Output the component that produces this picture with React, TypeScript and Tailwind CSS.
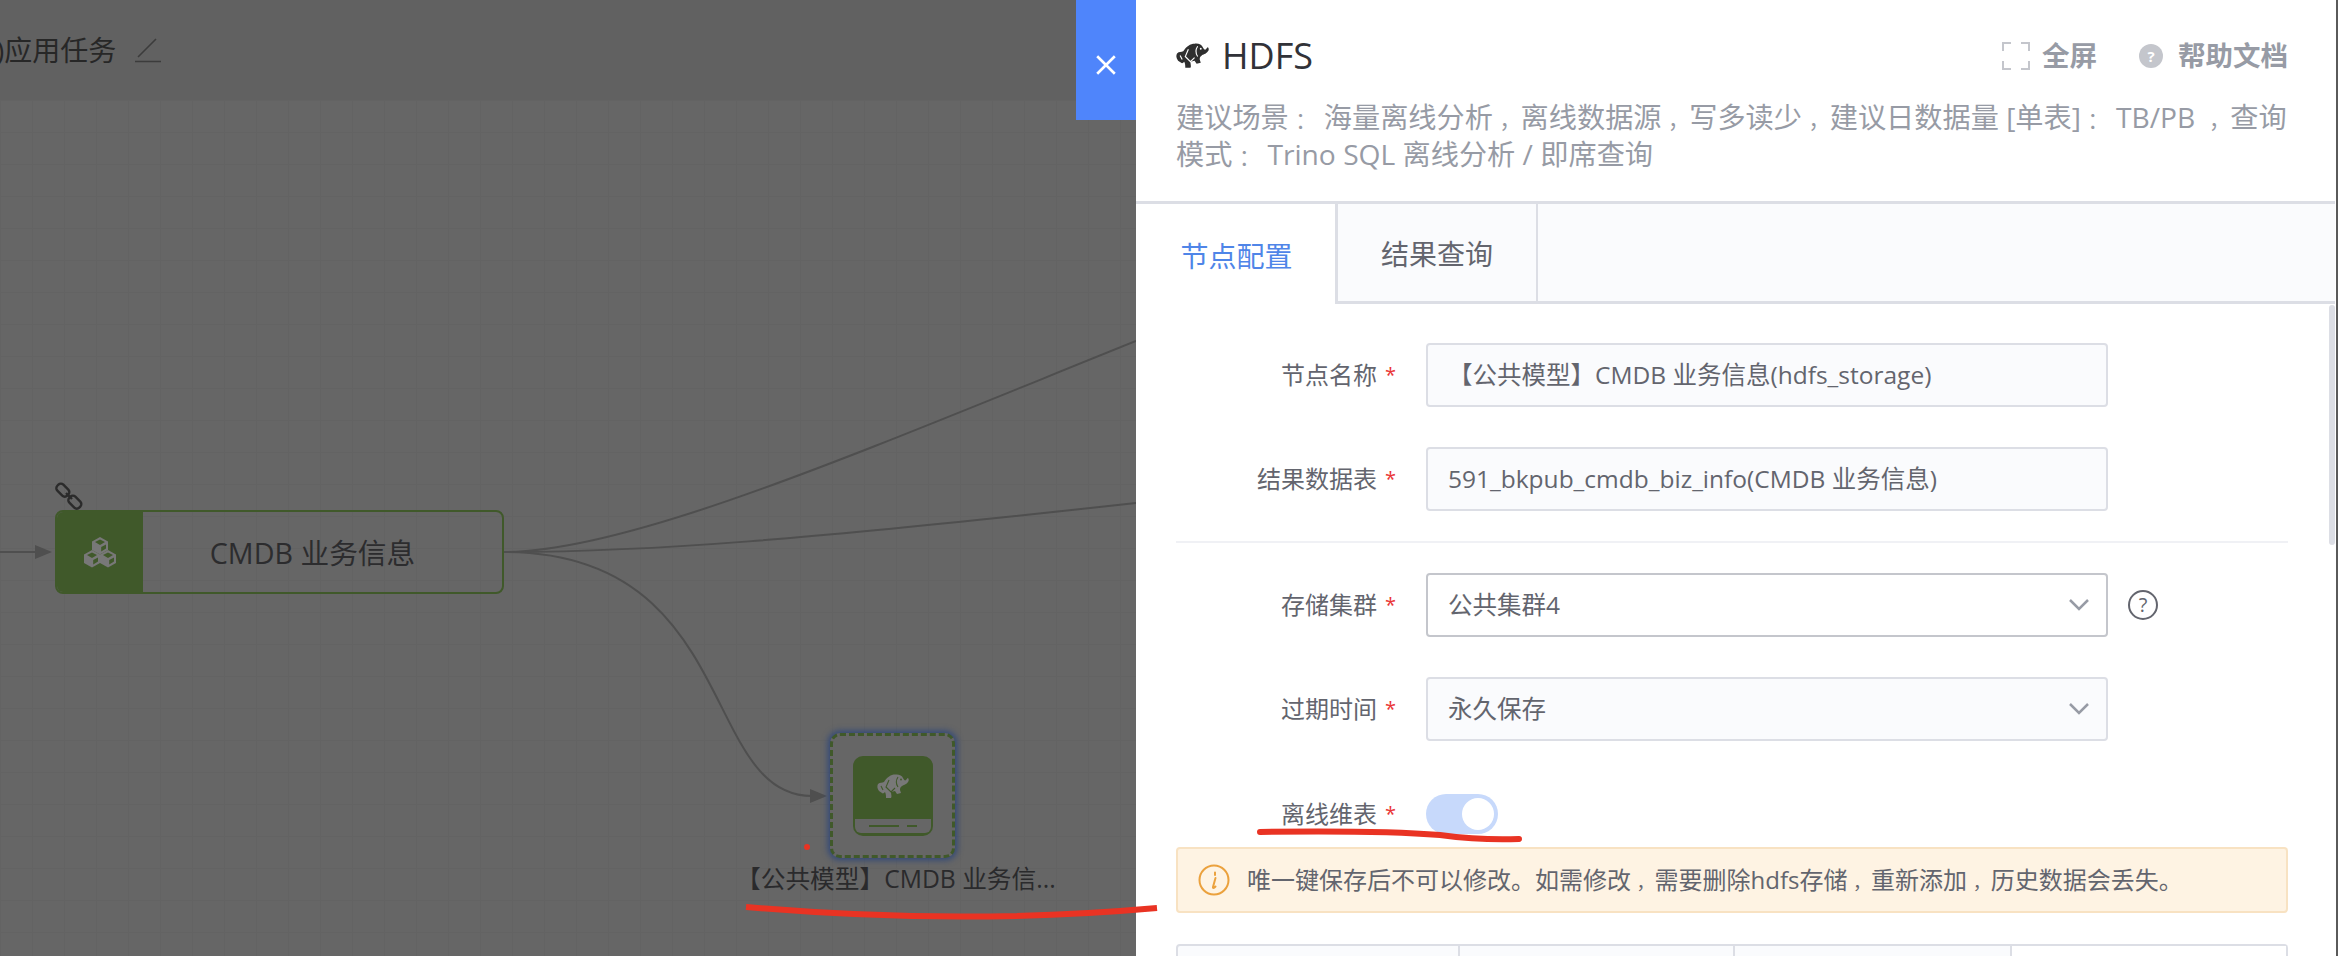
import React from "react";

const Cube = ({ x, y }: { x: number; y: number }) => (
  <g transform={`translate(${x} ${y})`}>
    <polygon points="8,0 16,4.5 16,13 8,17.5 0,13 0,4.5" fill="#787878" />
    <polygon points="8,2.5 13,5 8,8 3,5" fill="#40592a" />
    <polygon points="9.2,10 14,7.5 14,11.5 9.2,14.5" fill="#40592a" />
  </g>
);

const Elephant = ({ w, h, fill, line }: { w: number; h: number; fill: string; line: string }) => (
  <svg width={w} height={h} viewBox="0 0 32 25">
    <path
      fill={fill}
      d="M1 10C3 8 5 9 7 8C10 3 14 .5 18 .5C22 0 25 1.5 26 4C27 6 28 7 29 6C30 5 30 4 31 4C32 5 32 7 31 8C29 11 26 11 25 12C23 13 23 15 23 16L24 19L20 20L18 17L14 18C14 20 15 23 14 24L9 24C9 22 9 20 8 18C7 19 6 20 5 19L2 17C0 14 0 12 1 10Z"
    />
    <path fill="none" stroke={line} strokeWidth="1.1" d="M12 6L9 13L14 18L18 14M21 3C19 6 19 10 21 13M4 12L6 16" />
    <circle cx="24" cy="5.5" r="0.9" fill={line} />
  </svg>
);

const FormRow = ({ label, children }: { label: string; children: React.ReactNode }) => (
  <div className="flex items-center">
    <div className="w-[250px] pr-[32px] flex justify-end items-center text-[24px] text-[#63656e]">
      <span>{label}</span>
      <span className="ml-[8px] w-[9px] text-[20px] text-[#ea3636] leading-none">*</span>
    </div>
    {children}
  </div>
);

const Field = ({ text, white, select }: { text: string; white?: boolean; select?: boolean }) => (
  <div
    className={`w-[682px] h-[64px] rounded-[4px] border-2 flex items-center justify-between pl-[20px] pr-[16px] text-[24.5px] text-[#63656e] ${
      white ? "bg-white border-[#c4c6cc]" : "bg-[#fafbfd] border-[#dcdee5]"
    }`}
  >
    <span className="whitespace-nowrap">{text}</span>
    {select && (
      <svg width="22" height="14" viewBox="0 0 22 14" fill="none" stroke="#979ba5" strokeWidth="2.5">
        <path d="M2 2l9 9 9-9" />
      </svg>
    )}
  </div>
);

/* Full-width punctuation sits in the middle of its cell in the picture. */
const P = ({ c }: { c: string }) => (
  <span className="pl-[0.31em] text-[0.75em]">{c}</span>
);

export default function App() {
  return (
    <div className="relative flex w-[2338px] h-[956px] overflow-hidden bg-[#666666] [font-family:'Open_Sans','Noto_Sans_CJK_SC',sans-serif]">
      {/* Left dimmed canvas */}
      <div className="relative flex flex-col w-[1136px] h-full shrink-0">
        <div className="h-[100px] bg-[#616161] flex items-center overflow-hidden">
          <span className="ml-[-4px] text-[28px] text-[#272727] whitespace-nowrap">)应用任务</span>
          <svg className="ml-[18px]" width="28" height="26" viewBox="0 0 28 26" fill="none" stroke="#3c3c3c" strokeWidth="1.6">
            <path d="M1 24.5h26M4 20L22 2" />
          </svg>
        </div>
        <div className="flex-1 bg-[#666666] bg-[linear-gradient(#636363_1px,transparent_1px),linear-gradient(90deg,#636363_1px,transparent_1px)] bg-[size:32px_32px]" />

        {/* Wires */}
        <svg className="absolute left-0 top-0" width="1136" height="956" fill="none" stroke="#4f4f4f" strokeWidth="2">
          <path d="M0 552H36" />
          <path d="M504 552C630 552 860 452 1136 341" />
          <path d="M504 552C650 552 800 540 1136 503" />
          <path d="M504 552C740 552 700 796 812 796" />
          <polygon points="35,545 52,552 35,559" fill="#4f4f4f" stroke="none" />
          <polygon points="810,789 827,796 810,803" fill="#4f4f4f" stroke="none" />
        </svg>

        {/* Source node */}
        <svg className="absolute left-[54px] top-[481px]" width="30" height="30" viewBox="0 0 30 30" fill="none" stroke="#2b2b2b" strokeWidth="2.4">
          <rect x="2" y="5" width="14" height="8.5" rx="3.5" transform="rotate(45 9 9)" />
          <rect x="14" y="17" width="14" height="8.5" rx="3.5" transform="rotate(45 21 21)" />
          <path d="M12 12l6 6" />
        </svg>
        <div className="absolute left-[55px] top-[510px] w-[449px] h-[84px] rounded-[8px] border-2 border-[#40592a] flex overflow-hidden">
          <div className="w-[86px] bg-[#40592a] flex items-center justify-center">
            <svg width="32" height="31" viewBox="0 0 32 31">
              <Cube x={8} y={0} />
              <Cube x={0} y={13} />
              <Cube x={16} y={13} />
            </svg>
          </div>
          <div className="flex-1 flex items-center justify-center pr-[20px] pt-[2px] text-[28.7px] text-[#2c2c2e]">CMDB 业务信息</div>
        </div>

        {/* Storage node */}
        <div className="absolute left-[830px] top-[733px] w-[125px] h-[125px] rounded-[10px] border-[3px] border-dashed border-[#40592a] shadow-[0_0_6px_2px_#2f4779] bg-[#666666] flex items-center justify-center">
          <div className="w-[80px] h-[80px] rounded-[10px] bg-[#40592a] flex flex-col overflow-hidden">
            <div className="flex-1 flex items-center justify-center pb-[2px]">
              <Elephant w={32} h={25} fill="#787878" line="#40592a" />
            </div>
            <div className="mx-[2px] mb-[3px] h-[14px] rounded-b-[6px] bg-[#666666] flex items-center pl-[14px] gap-[8px]">
              <span className="w-[30px] h-[2px] bg-[#40592a]" />
              <span className="w-[10px] h-[2px] bg-[#40592a]" />
            </div>
          </div>
        </div>
        <div className="absolute left-[804px] top-[844px] w-[6px] h-[6px] rounded-full bg-[#e93323]" />
        <div className="absolute left-[736px] top-[863px] text-[24.7px] leading-[32px] text-[#2a2a2c] whitespace-nowrap">【公共模型】CMDB 业务信...</div>

        {/* Close button */}
        <div className="absolute right-0 top-0 w-[60px] h-[120px] bg-[#4f85fb] flex items-center justify-center">
          <svg className="mt-[10px]" width="22" height="22" viewBox="0 0 20 20" stroke="#ffffff" strokeWidth="2.4">
            <path d="M2 2l16 16M18 2L2 18" />
          </svg>
        </div>
      </div>

      {/* Right panel */}
      <div className="relative w-[1200px] h-full shrink-0 bg-white overflow-hidden flex flex-col">
        <div className="h-[201px] shrink-0 pl-[40px] pr-[48px] pt-[30px]">
          <div className="flex items-center justify-between h-[52px]">
            <div className="flex items-center">
              <Elephant w={33} h={26} fill="#2f2f2f" line="#ffffff" />
              <span className="ml-[13px] text-[36px] leading-none text-[#313238]">HDFS</span>
            </div>
            <div className="flex items-center font-bold text-[27.5px] text-[#979ba5]">
              <svg width="28" height="28" viewBox="0 0 28 28" fill="none" stroke="#c4c6cc" strokeWidth="2">
                <path d="M1 9V1h8M19 1h8v8M27 19v8h-8M9 27H1v-8" />
              </svg>
              <span className="ml-[12px]">全屏</span>
              <span className="ml-[42px] w-[24px] h-[24px] rounded-full bg-[#c4c6cc] text-white text-[15px] flex items-center justify-center">?</span>
              <span className="ml-[15px]">帮助文档</span>
            </div>
          </div>
          <div className="mt-[17px] text-[28.2px] leading-[37px] text-[#979ba5] whitespace-nowrap">
            <div className="h-[37px]">建议场景<P c="：" /> 海量离线分析<P c="，" />离线数据源<P c="，" />写多读少<P c="，" />建议日数据量 [单表]<P c="：" /> TB/PB <P c="，" />查询</div>
            <div className="h-[37px]">模式<P c="：" /> Trino SQL 离线分析 / 即席查询</div>
          </div>
        </div>

        {/* Tabs */}
        <div className="h-[103px] shrink-0 mr-[1px] border-t-[3px] border-[#dcdee5] flex text-[28px]">
          <div className="w-[202px] flex items-center justify-center pl-[2px] pt-[4px] text-[#4f85e8] bg-white border-r-[3px] border-[#dcdee5]">节点配置</div>
          <div className="w-[200px] flex items-center justify-center pt-[3px] bg-[#fafbfd] text-[#63656e] border-r-[2px] border-b-[3px] border-[#dcdee5]">结果查询</div>
          <div className="flex-1 bg-[#fafbfd] border-b-[3px] border-[#dcdee5]" />
        </div>

        {/* Form */}
        <div className="pl-[40px] pr-[48px] pt-[39px] flex flex-col">
          <div className="flex flex-col gap-[40px]">
            <FormRow label="节点名称"><Field text="【公共模型】CMDB 业务信息(hdfs_storage)" /></FormRow>
            <FormRow label="结果数据表"><Field text="591_bkpub_cmdb_biz_info(CMDB 业务信息)" /></FormRow>
          </div>
          <div className="mt-[30px] h-[2px] bg-[#f0f1f5]" />
          <div className="mt-[30px] flex flex-col gap-[40px]">
            <FormRow label="存储集群">
              <Field text="公共集群4" white select />
              <span className="ml-[20px] w-[30px] h-[30px] rounded-full border-2 border-[#63656e] text-[#63656e] text-[20px] flex items-center justify-center">?</span>
            </FormRow>
            <FormRow label="过期时间"><Field text="永久保存" select /></FormRow>
          </div>
          <div className="mt-[53px]">
            <FormRow label="离线维表">
              <div className="w-[72px] h-[40px] rounded-full bg-[#c7d9fb] flex items-center justify-end pr-[4px]">
                <div className="w-[32px] h-[32px] rounded-full bg-white" />
              </div>
            </FormRow>
          </div>
          <div className="mt-[13px] h-[66px] rounded-[4px] border-2 border-[#f8e2c2] bg-[#fef3e3] flex items-center pl-[20px] text-[24px] text-[#63656e] whitespace-nowrap">
            <svg width="32" height="32" viewBox="0 0 32 32" fill="none" stroke="#eba13d" strokeWidth="2">
              <circle cx="16" cy="16" r="14.5" />
              <path d="M17 8.5v2.5M17.5 14l-2.5 9c-.3 1.2.8 1.4 2.5-.5" strokeLinecap="round" />
            </svg>
            <span className="ml-[17px]">唯一键保存后不可以修改。如需修改<P c="，" />需要删除hdfs存储<P c="，" />重新添加<P c="，" />历史数据会丢失。</span>
          </div>
          <div className="mt-[31px] h-[60px] shrink-0 rounded-t-[4px] border-2 border-[#dcdee5] bg-[#fafbfd] grid grid-cols-[282px_275px_277px_1fr]">
            <div className="border-r-2 border-[#dcdee5]" />
            <div className="border-r-2 border-[#dcdee5]" />
            <div className="border-r-2 border-[#dcdee5]" />
            <div className="bg-white" />
          </div>
        </div>

        <div className="absolute right-[1px] top-[305px] w-[6px] h-[240px] rounded-[3px] bg-[#dcdee5]" />
      </div>
      <div className="w-[2px] h-full bg-[#5a5a5a]" />

      {/* Hand-drawn annotations */}
      <svg className="absolute left-0 top-0 pointer-events-none" width="2338" height="956" fill="none" stroke="#e93323" strokeWidth="6">
        <path d="M746 907C860 917 1000 922 1157 908" />
        <path d="M1260 832C1330 831 1400 832 1440 835C1470 839 1495 840 1519 839" strokeLinecap="round" />
      </svg>
    </div>
  );
}
